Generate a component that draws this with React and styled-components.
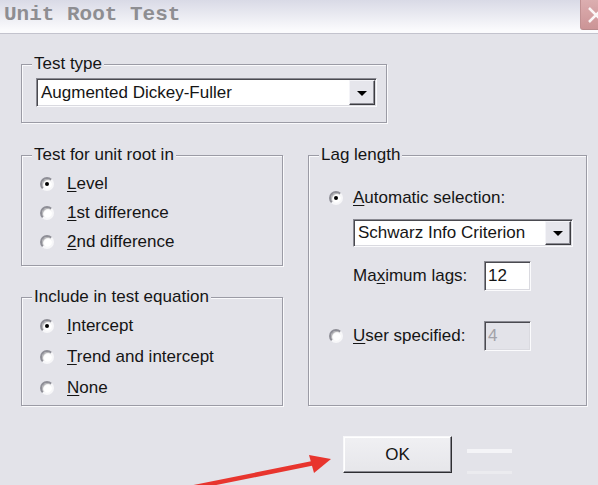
import React from "react";
import styled, { createGlobalStyle } from "styled-components";

const Global = createGlobalStyle`
  html, body { margin: 0; padding: 0; background: #e3e3e9; }
  * { box-sizing: border-box; }
`;

const BODY_BG = "#e3e3e9";

const Window = styled.div`
  position: relative;
  width: 598px;
  height: 485px;
  overflow: hidden;
  background: ${BODY_BG};
  font-family: "Liberation Sans", Arial, sans-serif;
  font-size: 17px;
  color: #151515;
`;

const TitleBar = styled.div`
  height: 34px;
  display: flex;
  justify-content: space-between;
  align-items: flex-start;
  background: linear-gradient(#d9dae6, #fbfbfd 92%);
  border-bottom: 1px solid #c3c3cd;
`;

const Title = styled.div`
  font-family: "Liberation Mono", "Courier New", monospace;
  font-weight: bold;
  font-size: 21px;
  color: #8e8e92;
  padding: 2px 0 0 4px;
  line-height: 26px;
`;

const CloseButton = styled.div`
  width: 18px;
  height: 30px;
  background: linear-gradient(#dcaeb0, #cc9496);
  border-left: 1px solid #c09092;
  border-bottom: 1px solid #b88a8c;
  border-bottom-left-radius: 3px;
  overflow: hidden;
`;

const Body = styled.div`
  padding: 30px 0 0 21px;
`;

const Group = styled.div`
  position: relative;
  width: ${(p) => p.$w}px;
  height: ${(p) => p.$h}px;
  border: 1px solid #9b9ba5;
  box-shadow: inset 1px 1px 0 #fafafc, 1px 1px 0 #fafafc;
  padding: ${(p) => p.$pad || "0"};
`;

const Legend = styled.span`
  position: absolute;
  top: -11px;
  left: ${(p) => p.$left || 10}px;
  padding: 0 2px;
  line-height: 20px;
  background: ${BODY_BG};
`;

const Combo = styled.div`
  width: ${(p) => p.$w}px;
  height: ${(p) => p.$h}px;
  display: flex;
  align-items: center;
  justify-content: space-between;
  background: #fff;
  border: 1px solid;
  border-color: #8a8a92 #fbfbfd #fbfbfd #8a8a92;
  box-shadow: inset 1px 1px 0 #4a4a50, inset -1px -1px 0 #dadae0;
  padding: 1px 1px 1px 4px;
  margin: ${(p) => p.$m || "0"};
  white-space: nowrap;
`;

const DropButton = styled.div`
  width: 26px;
  align-self: stretch;
  display: flex;
  align-items: center;
  justify-content: center;
  background: #e6e6ec;
  border: 1px solid;
  border-color: #f4f4f8 #3c3c40 #3c3c40 #f4f4f8;
  box-shadow: inset -1px -1px 0 #8c8c94;
  &::after {
    content: "";
    width: 0;
    height: 0;
    border-left: 5px solid transparent;
    border-right: 5px solid transparent;
    border-top: 5px solid #000;
    margin-top: 1px;
  }
`;

const Columns = styled.div`
  display: flex;
  gap: 25px;
  margin-top: 32px;
`;

const LeftCol = styled.div`
  display: flex;
  flex-direction: column;
  gap: 31px;
`;

const OptionRow = styled.div`
  display: flex;
  align-items: center;
  height: ${(p) => p.$h || 30}px;
  gap: ${(p) => p.$gap || 13}px;
  white-space: nowrap;
`;

const Radio = styled.span`
  position: relative;
  flex: none;
  width: 14px;
  height: 14px;
  border-radius: 50%;
  background: #fff;
  border: 2px solid;
  border-color: #8e8e96 #f7f7f9 #f7f7f9 #8e8e96;
  box-shadow: inset 1px 1px 1px rgba(70, 70, 78, 0.45);
  &::after {
    content: "";
    display: ${(p) => (p.$checked ? "block" : "none")};
    position: absolute;
    left: 3px;
    top: 3px;
    width: 4px;
    height: 4px;
    border-radius: 50%;
    background: #000;
  }
`;

const Key = styled.u`
  text-decoration-thickness: 1px;
  text-underline-offset: 2px;
`;

const Indent = styled.div`
  padding-left: ${(p) => p.$left}px;
`;

const FieldRow = styled.div`
  display: flex;
  align-items: center;
  margin-top: ${(p) => p.$mt || 0}px;
`;

const FieldLabel = styled.span`
  width: ${(p) => p.$w}px;
  flex: none;
  white-space: nowrap;
`;

const TextBox = styled.div`
  width: 47px;
  height: 30px;
  display: flex;
  align-items: center;
  padding-left: 3px;
  background: ${(p) => (p.$disabled ? BODY_BG : "#fff")};
  color: ${(p) => (p.$disabled ? "#a2a2a8" : "#151515")};
  border: 1px solid;
  border-color: #8a8a92 #fbfbfd #fbfbfd #8a8a92;
  box-shadow: inset 1px 1px 0 #4a4a50, inset -1px -1px 0 #dadae0;
`;

const ButtonRow = styled.div`
  display: flex;
  align-items: flex-start;
  gap: 15px;
  margin-top: 30px;
  padding-left: 322px;
`;

const OkButton = styled.div`
  width: 109px;
  height: 37px;
  display: flex;
  align-items: center;
  justify-content: center;
  background: linear-gradient(#f0f0f3, #e6e6ea);
  border: 1px solid;
  border-color: #f8f8fa #2e2e32 #2e2e32 #f8f8fa;
  box-shadow: inset -1px -1px 0 #8a8a92, inset 1px 1px 0 #fff;
`;

const GhostButton = styled.div`
  width: 45px;
  height: 25px;
  margin-top: 13px;
  border-top: 4px solid #f4f4f7;
  border-bottom: 3px solid #ebebef;
`;

const ArrowLayer = styled.svg`
  position: absolute;
  left: 0;
  top: 0;
  pointer-events: none;
`;

export default function App() {
  return (
    <Window>
      <Global />
      <TitleBar>
        <Title>Unit Root Test</Title>
        <CloseButton>
          <svg width="18" height="30" viewBox="0 0 18 30">
            <path d="M8 8 L22 22 M8 22 L22 8" stroke="#fff" strokeWidth="2.5" opacity="0.9" />
          </svg>
        </CloseButton>
      </TitleBar>
      <Body>
        <Group $w={366} $h={59} $pad="13px 0 0 14px">
          <Legend>Test type</Legend>
          <Combo $w={341} $h={29}>
            Augmented Dickey-Fuller
            <DropButton />
          </Combo>
        </Group>
        <Columns>
          <LeftCol>
            <Group $w={262} $h={111} $pad="13px 0 0 18px">
              <Legend>Test for unit root in</Legend>
              <OptionRow $h={29} $gap={13}>
                <Radio $checked />
                <span><Key>L</Key>evel</span>
              </OptionRow>
              <OptionRow $h={29} $gap={13}>
                <Radio />
                <span><Key>1</Key>st difference</span>
              </OptionRow>
              <OptionRow $h={29} $gap={13}>
                <Radio />
                <span><Key>2</Key>nd difference</span>
              </OptionRow>
            </Group>
            <Group $w={262} $h={109} $pad="12px 0 0 18px">
              <Legend>Include in test equation</Legend>
              <OptionRow $h={31} $gap={13}>
                <Radio $checked />
                <span><Key>I</Key>ntercept</span>
              </OptionRow>
              <OptionRow $h={31} $gap={13}>
                <Radio />
                <span><Key>T</Key>rend and intercept</span>
              </OptionRow>
              <OptionRow $h={31} $gap={13}>
                <Radio />
                <span><Key>N</Key>one</span>
              </OptionRow>
            </Group>
          </LeftCol>
          <Group $w={279} $h={251} $pad="27px 0 0 20px">
            <Legend>Lag length</Legend>
            <OptionRow $h={30} $gap={10}>
              <Radio $checked />
              <span><Key>A</Key>utomatic selection:</span>
            </OptionRow>
            <Indent $left={24}>
              <Combo $w={220} $h={28} $m="6px 0 0 0">
                Schwarz Info Criterion
                <DropButton />
              </Combo>
              <FieldRow $mt={14}>
                <FieldLabel $w={131}>Ma<Key>x</Key>imum lags:</FieldLabel>
                <TextBox>12</TextBox>
              </FieldRow>
            </Indent>
            <FieldRow $mt={30}>
              <OptionRow $h={30} $gap={10}>
                <Radio />
                <FieldLabel $w={131}><Key>U</Key>ser specified:</FieldLabel>
              </OptionRow>
              <TextBox $disabled>4</TextBox>
            </FieldRow>
          </Group>
        </Columns>
        <ButtonRow>
          <OkButton>OK</OkButton>
          <GhostButton />
        </ButtonRow>
      </Body>
      <ArrowLayer width="598" height="485" viewBox="0 0 598 485">
        <path d="M190 488 L314 463" stroke="#e8352e" strokeWidth="4.5" strokeLinecap="round" />
        <path d="M331 459 L309 455 L314 473 Z" fill="#e8352e" />
      </ArrowLayer>
    </Window>
  );
}
